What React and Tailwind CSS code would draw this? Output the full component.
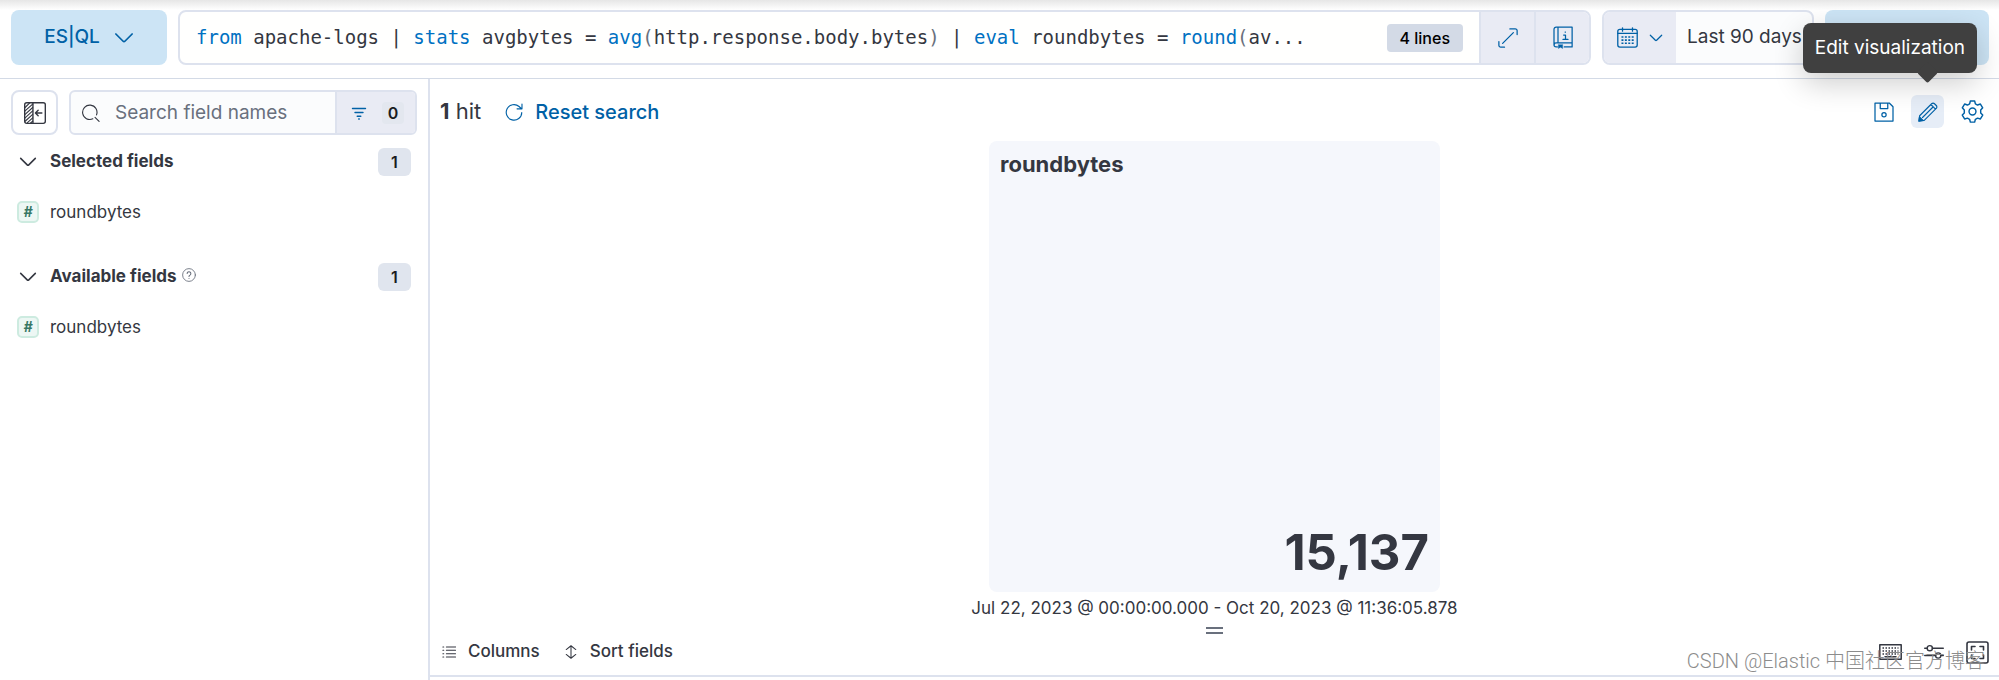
import { clsx } from 'clsx';

const Icon = ({ className, children, viewBox = '0 0 16 16' }) => (
    <svg
        viewBox={viewBox}
        className={clsx('shrink-0', className)}
        fill="none"
        stroke="currentColor"
        strokeWidth="1"
        strokeLinecap="round"
        strokeLinejoin="round"
        aria-hidden="true"
    >
        {children}
    </svg>
);

const ChevronIcon = ({ className }) => (
    <Icon className={className}>
        <path d="M1.5 4.8 7.3 10.6Q8 11.3 8.7 10.6L14.5 4.8" strokeWidth="1.4" />
    </Icon>
);

const CollapseIcon = () => (
    <Icon className="size-[22px]">
        <rect x="0.5" y="0.5" width="15" height="15" rx="1.5" />
        <path d="M6.5.5v15M13 8H8.5M10.3 6 8.3 8l2 2" />
        <path d="M.8 4 4 .8M.8 6.5 6.3 1.5M.8 9 6.3 4M.8 11.5 6.3 6.5M.8 14 6.3 9M2.5 15 6.3 11.5M4.8 15.3 6.3 14" strokeWidth="0.8" />
    </Icon>
);

const SearchIcon = () => (
    <Icon className="size-[18px]">
        <path d="M9.6 13.2A6.4 6.4 0 1 1 12.9 9.7M11.6 11.8l3.6 3.6" />
    </Icon>
);

const FilterIcon = () => (
    <Icon className="size-4">
        <path d="M1.5 3.5h13M4 7.5h8M6.2 11.3h3.6M7.7 14h.6" strokeWidth="1.4" />
    </Icon>
);

const ExpandIcon = () => (
    <Icon className="size-5">
        <path d="M9.5.7h4.3a1.5 1.5 0 0 1 1.5 1.5v3M.7 10.8v3a1.5 1.5 0 0 0 1.5 1.5h3M3.7 12.3 12.3 3.7" />
    </Icon>
);

const DocumentationIcon = () => (
    <Icon className="h-[23px] w-5" viewBox="0 0 16 18">
        <path d="M3.5 16.5h-1a1.7 1.7 0 0 1-1.7-1.7V2.4A1.7 1.7 0 0 1 2.5.7h12.8v12.6H2.5a1.6 1.6 0 0 0-1.6 1.6M4 .7v12.6M15.3 13.3v3.2H9" />
        <path d="M8.5 7H10v3.3M8 10.5h4M9.7 4.6h.3" />
        <path d="M4.3 14.8v3l1.7-1 1.7 1v-3z" fill="currentColor" strokeWidth="0.3" />
    </Icon>
);

const CalendarIcon = () => (
    <Icon className="size-[21px]">
        <rect x="0.6" y="1.8" width="14.8" height="13.5" rx="1.6" />
        <path d="M.6 4.8h14.8M4.2.6v2.6M11.8.6v2.6" />
        <path d="M3.4 7.6h9.4M3.4 10h9.4M3.4 12.4h9.4" strokeDasharray="1.5 1.1" strokeLinecap="butt" strokeWidth="1.2" />
    </Icon>
);

const RefreshIcon = () => (
    <Icon className="size-[18px]">
        <path d="M14.9 8.4a6.9 6.9 0 1 1-2.4-5.3l2.2 2M15.1.9v4.3h-4.4" />
    </Icon>
);

const SaveIcon = () => (
    <Icon className="size-5">
        <path d="M.8.8h11.4l3 3v11.4H.8zM5 .8v4.4h6V.8" />
        <circle cx="8" cy="10.2" r="1.7" />
    </Icon>
);

const PencilIcon = () => (
    <Icon className="size-5">
        <path d="M.8 15.2 1.3 11 10.9 1.4a1.6 1.6 0 0 1 2.3 0l1.4 1.4a1.6 1.6 0 0 1 0 2.3L5 14.7zM10.3 2l3.7 3.7M3.6 12.4 12 4" strokeWidth="0.9" />
        <path d="M.7 15.3 1.2 12l2.8 2.8z" fill="currentColor" />
    </Icon>
);

const GearIcon = () => (
    <Icon className="size-[23px]">
        <path d="M6.5.7h3l.5 2 1.5.8 2-.7 1.6 2.6L13.7 7v2l1.4 1.5-1.6 2.7-2-.6-1.5.8-.5 2h-3l-.5-2-1.5-.8-2 .6-1.6-2.7L2.3 9V7L.9 5.4l1.6-2.6 2 .7L6 2.7z" />
        <circle cx="8" cy="8" r="2.4" />
    </Icon>
);

const HelpIcon = () => (
    <Icon className="size-[14px] text-[#69707d]">
        <circle cx="8" cy="8" r="7.3" />
        <path d="M5.9 6.3a2.1 2.1 0 1 1 3.2 1.8Q8 8.7 8 9.6M8 11.9v.1" strokeWidth="1.2" />
    </Icon>
);

const ColumnsIcon = () => (
    <Icon className="size-[14px]">
        <path d="M5 2.2h10.5M5 6h10.5M5 10h10.5M5 13.8h10.5M1 2.2h1M1 6h1M1 10h1M1 13.8h1" strokeWidth="1.2" />
    </Icon>
);

const SortIcon = () => (
    <Icon className="size-[14px]">
        <path d="M8 1v14M2.5 5.2 8 .9l5.5 4.3M2.5 10.8 8 15.1l5.5-4.3" strokeWidth="1.2" />
    </Icon>
);

const KeyboardIcon = () => (
    <Icon className="h-4 w-[23px]" viewBox="0 0 23 16">
        <rect x="0.8" y="0.8" width="21.4" height="14.4" strokeWidth="1.5" />
        <path d="M3.5 4h16M3.5 7h16M3.5 10h16" strokeWidth="1.5" strokeDasharray="1.5 1.5" strokeLinecap="butt" />
        <path d="M6 12.8h11" strokeWidth="1.5" />
    </Icon>
);

const ControlsIcon = () => (
    <Icon className="h-4 w-5" viewBox="0 0 20 16">
        <path d="M.7 4.2h2.6M8.3 4.2h11M.7 11.5h11M16.7 11.5h2.6" strokeWidth="1.4" />
        <circle cx="5.8" cy="4.2" r="2.6" strokeWidth="1.4" />
        <circle cx="14.2" cy="11.5" r="2.6" strokeWidth="1.4" />
    </Icon>
);

const FullScreenIcon = () => (
    <Icon className="size-[23px]" viewBox="0 0 23 23">
        <rect x="1" y="1" width="21" height="21" rx="2" strokeWidth="1.6" />
        <path d="M5.5 9V5.5H9M14 5.5h3.5V9M17.5 14v3.5H14M9 17.5H5.5V14" strokeWidth="1.6" />
    </Icon>
);

const QUERY = [
    ['from', 'keyword'],
    [' apache-logs | '],
    ['stats', 'keyword'],
    [' avgbytes = '],
    ['avg', 'keyword'],
    ['(', 'paren'],
    ['http.response.body.bytes'],
    [')', 'paren'],
    [' | '],
    ['eval', 'keyword'],
    [' roundbytes = '],
    ['round', 'keyword'],
    ['(', 'paren'],
    ['av...'],
];

const TopBar = () => (
    <header className="flex gap-[11px] border-b border-[#d3dae6] bg-linear-to-b from-[#e6e6e6] to-white to-[10px] pt-[10px] pr-[10px] pb-[13px] pl-[11px]">
        <button className="flex h-[55px] w-[156px] items-center justify-center gap-[14px] rounded-lg bg-[#cce4f5] text-[19px] font-medium text-[#0061a6]">
            ES|QL
            <ChevronIcon className="size-5" />
        </button>

        <div className="flex h-[55px] min-w-0 flex-1 overflow-hidden rounded-lg border-2 border-[#dde2ee] bg-[#fffffe]">
            <code className="flex-1 self-center truncate pl-4 font-['DejaVu_Sans_Mono',monospace] text-[19px] whitespace-pre text-[#343741]">
                {QUERY.map(([text, kind], i) => (
                    <span
                        key={i}
                        className={clsx(kind === 'keyword' && 'text-[#0071c2]', kind === 'paren' && 'text-[#69707d]')}
                    >
                        {text}
                    </span>
                ))}
            </code>
            <span className="mr-4 self-center rounded bg-[#d3dae6] px-[13px] text-[16px] leading-7 font-medium text-black">
                4 lines
            </span>
            <button aria-label="Expand editor" className="flex w-[55px] items-center justify-center border-l-2 border-[#dde2ee] bg-[#e9ebf4] text-[#0061a6]">
                <ExpandIcon />
            </button>
            <button aria-label="Documentation" className="flex w-[55px] items-center justify-center border-l-2 border-[#dde2ee] bg-[#e9ebf4] text-[#0061a6]">
                <DocumentationIcon />
            </button>
        </div>

        <div className="flex h-[55px] w-[212px] overflow-hidden rounded-lg border-2 border-[#dde2ee] bg-[#fbfcfd]">
            <button aria-label="Quick select" className="flex w-[72px] items-center justify-center gap-[11px] bg-[#e9ebf4] text-[#0061a6]">
                <CalendarIcon />
                <ChevronIcon className="size-[14px]" />
            </button>
            <button className="pl-[11px] text-[19px] whitespace-nowrap text-[#343741]">Last 90 days</button>
        </div>

        <button aria-label="Refresh" className="h-[55px] w-[164px] rounded-lg bg-[#cce4f5]" />
    </header>
);

const FieldGroup = ({ title, help, fields }) => (
    <section>
        <button className="flex h-7 w-full items-center pr-[6px] pl-2 text-left">
            <ChevronIcon className="size-[18px]" />
            <span className="ml-[13px] text-[17px] font-bold">{title}</span>
            {help && (
                <span className="mb-1 ml-[6px]">
                    <HelpIcon />
                </span>
            )}
            <span className="ml-auto w-[33px] rounded-md bg-[#e0e5ee] text-center text-[16px] leading-7 font-semibold text-[#1a1c21]">
                {fields.length}
            </span>
        </button>
        <ul className="pt-[25px] pb-10">
            {fields.map((name) => (
                <li key={name} className="flex items-center gap-[11px] pl-[6px] text-[17px] leading-[22px]">
                    <span className="flex size-[22px] items-center justify-center rounded-[5px] border-2 border-[#cdebe0] bg-[#edf7f4] text-[14px] font-bold text-[#387765] italic">
                        #
                    </span>
                    {name}
                </li>
            ))}
        </ul>
    </section>
);

const Sidebar = () => (
    <aside className="w-[430px] shrink-0 border-r-2 border-[#dde2ee] px-[11px] pt-[11px]">
        <div className="mb-[13px] flex h-[45px] gap-[11px]">
            <button aria-label="Hide sidebar" className="flex w-[47px] items-center justify-center rounded-lg border-2 border-[#dde2ee]">
                <CollapseIcon />
            </button>
            <div className="flex w-[348px] overflow-hidden rounded-md border-2 border-[#dde2ee] bg-[#fbfcfd]">
                <label className="flex flex-1 items-center gap-[15px] pl-[11px]">
                    <SearchIcon />
                    <input
                        type="search"
                        aria-label="Search field names"
                        placeholder="Search field names"
                        className="h-full w-full bg-transparent text-[19px] outline-none placeholder:text-[#69707d]"
                    />
                </label>
                <button aria-label="Filter by type" className="flex w-[80px] items-center justify-center gap-[15px] border-l-2 border-[#dde2ee] bg-[#e9ebf4] pl-[3px] text-[#0061a6]">
                    <FilterIcon />
                    <span className="w-[22px] rounded bg-[#e3e7ef] text-[16px] leading-[22px] font-semibold text-[#1a1c21]">0</span>
                </button>
            </div>
        </div>
        <FieldGroup title="Selected fields" fields={['roundbytes']} />
        <FieldGroup title="Available fields" help fields={['roundbytes']} />
    </aside>
);

const Toolbar = () => (
    <div className="flex h-[33px] items-center pr-[15px] pl-[10px]">
        <span className="text-[22px]">
            <strong className="font-bold">1</strong> hit
        </span>
        <button className="ml-6 flex items-center gap-3 text-[20px] font-medium text-[#0061a6]">
            <RefreshIcon />
            Reset search
        </button>
        <div className="ml-auto flex items-center gap-[17px] text-[#0061a6]">
            <button aria-label="Save visualization">
                <SaveIcon />
            </button>
            <div className="relative">
                <button aria-label="Edit visualization" className="flex size-[33px] items-center justify-center rounded-md bg-[#e6edf7]">
                    <PencilIcon />
                </button>
                <div
                    role="tooltip"
                    className="absolute right-[-33px] bottom-[55px] rounded-lg bg-[#404040] px-3 text-[19px] leading-[50px] whitespace-nowrap text-white shadow-[0_10px_30px_rgba(0,0,0,0.2)]"
                >
                    Edit visualization
                    <span className="absolute right-[42px] bottom-[-7px] size-[15px] rotate-45 rounded-xs bg-[#404040]" />
                </div>
            </div>
            <button aria-label="Chart options">
                <GearIcon />
            </button>
        </div>
    </div>
);

const Metric = () => (
    <figure className="flex flex-col items-center">
        <div className="flex size-[451px] flex-col justify-between rounded-lg bg-[#f5f7fc] px-[11px] pt-[9px] pb-[9px]">
            <h2 className="text-[22px] leading-7 font-bold">roundbytes</h2>
            <p className="text-right text-[49px] leading-[60px] font-bold">15,137</p>
        </div>
        <figcaption className="mt-1 text-[17px] leading-6">
            Jul 22, 2023 @ 00:00:00.000 - Oct 20, 2023 @ 11:36:05.878
        </figcaption>
        <button aria-label="Resize" className="mt-[7px] h-[7px] w-[17px] border-y-2 border-[#69707d]" />
    </figure>
);

const GridToolbar = () => (
    <div className="relative mt-auto flex h-[43px] items-center border-b-2 border-[#dde2ee] pr-[10px] pb-[5px] pl-3 text-[17px] font-medium">
        <button className="flex items-center gap-3">
            <ColumnsIcon />
            Columns
        </button>
        <button className="ml-6 flex items-center gap-3">
            <SortIcon />
            Sort fields
        </button>
        <div className="ml-auto flex items-center gap-[22px]">
            <button aria-label="Keyboard shortcuts">
                <KeyboardIcon />
            </button>
            <button aria-label="Display options">
                <ControlsIcon />
            </button>
            <button aria-label="Full screen">
                <FullScreenIcon />
            </button>
        </div>
        <span className="absolute right-[14px] bottom-0 font-[Roboto,'Noto_Sans_CJK_SC',sans-serif] text-[20px] leading-7 font-light whitespace-nowrap text-[#8c8c8c]">
            CSDN @Elastic 中国社区官方博客
        </span>
    </div>
);

export default function App() {
    return (
        <div className="flex min-h-screen flex-col bg-white font-[Inter,sans-serif] text-[#343741]">
            <TopBar />
            <div className="flex flex-1">
                <Sidebar />
                <main className="flex flex-1 flex-col pt-4 pb-[3px]">
                    <Toolbar />
                    <div className="pt-[13px]">
                        <Metric />
                    </div>
                    <GridToolbar />
                </main>
            </div>
        </div>
    );
}
